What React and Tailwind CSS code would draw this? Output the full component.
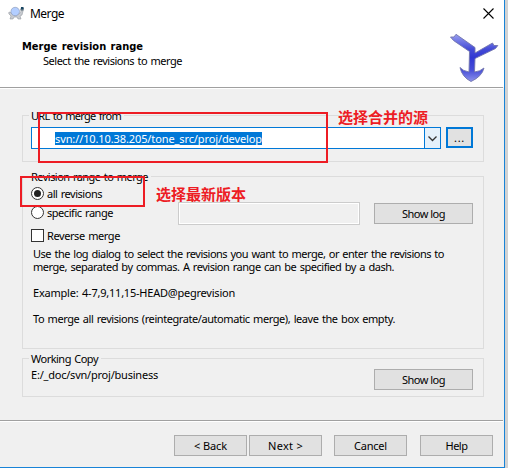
import { useLayoutEffect, useRef, useState } from "react";

// Text set to a fixed run length by adjusting its tracking.
function Label({ children, w, className = "" }) {
  const ref = useRef(null);
  const [spacing, setSpacing] = useState(0);
  useLayoutEffect(() => {
    const natural = ref.current.getBoundingClientRect().width;
    setSpacing((w - natural) / children.length);
  }, [children, w]);
  return (
    <span ref={ref} style={{ letterSpacing: `${spacing}px` }} className={`inline-block whitespace-pre ${className}`}>
      {children}
    </span>
  );
}

function Button({ children, w, className = "" }) {
  return (
    <button className={`flex h-[21px] shrink-0 items-center justify-center border border-[#adadad] bg-[#e1e1e1] ${className}`}>
      <Label w={w}>{children}</Label>
    </button>
  );
}

function Group({ title, w, className = "", children }) {
  return (
    <section className={`relative w-[462px] shrink-0 border border-[#dcdcdc] ${className}`}>
      <h2 className="absolute -top-[7px] left-[6px] h-[13px] bg-[#f0f0f0] pr-[3px] pl-[2px] leading-[13px]">
        <Label w={w}>{title}</Label>
      </h2>
      {children}
    </section>
  );
}

function Radio({ checked }) {
  return (
    <span className="flex size-[13px] shrink-0 items-center justify-center rounded-full border border-[#333] bg-white">
      {checked && <span className="size-[7px] rounded-full bg-[#222]" />}
    </span>
  );
}

function TurtleIcon() {
  return (
    <svg className="mt-[6px] h-[14px] w-[17px]" viewBox="0 0 17 14">
      <path d="M1 8 Q0 6 2 6 L4 8 L11 8 L14 4 L15 5 L14 9 L12 10 L13 13 L10 13 L9 11 L6 11 L5 13 L2 13 L3 10 Z" fill="#c8cbd0" stroke="#969ba2" strokeWidth=".6" />
      <ellipse cx="7.2" cy="5.5" rx="4.3" ry="4.2" fill="#b3ceff" stroke="#8794b2" strokeWidth=".6" />
      <path d="M12 4 L13 1.5 L16 2 L15.5 5 L13 5 Z" fill="#8a969e" />
      <rect x="13" y="1" width="2.5" height="2.5" fill="#174461" />
    </svg>
  );
}

function MergeArrow() {
  return (
    <svg className="absolute top-[33px] left-[449px] h-[50px] w-[50px]" viewBox="0 0 50 50">
      <defs>
        <linearGradient id="arrow" gradientUnits="userSpaceOnUse" x1="0" y1="0" x2="0" y2="49">
          <stop offset="0" stopColor="#a0a6f2" />
          <stop offset=".33" stopColor="#444bd6" />
          <stop offset=".5" stopColor="#3037d2" />
          <stop offset=".75" stopColor="#464dd8" />
          <stop offset="1" stopColor="#8f95ec" />
        </linearGradient>
      </defs>
      <path d="M1.500 4 L5 4 L7 1.300 L26 14.500 V20 L43.500 10 L45 12.500 L48.800 12.500 L46.500 15.500 L26 25.500 L25.500 39 Q31 38.500 35 35 Q33 43.500 22 48.500 Q13 44 11 34.500 Q14 38 20 39 L20.500 18.500 L4.500 7.500 Z" fill="url(#arrow)" stroke="#7275ad" strokeWidth=".9" strokeLinejoin="round" />
    </svg>
  );
}

export default function App() {
  return (
    <div className="relative flex h-[468px] w-[508px] overflow-hidden bg-[#d2d2d2] font-['Noto_Sans',sans-serif] text-[11px] leading-[13px] [word-spacing:1px] text-black">
      <div className="flex h-[468px] w-[505px] flex-col border-r border-b border-[#1883d7] bg-[#f0f0f0]">
        <header className="h-[87px] shrink-0 bg-white">
          <div className="flex h-[27px] pl-2">
            <TurtleIcon />
            <Label w={34} className="mt-[6px] ml-[5px] text-[12px] leading-4">Merge</Label>
            <svg className="mt-2 mr-[10px] ml-auto size-[11px]" viewBox="0 0 11 11">
              <path d="M.5 .5 L10.500 10.500 M10.500 .5 L.5 10.500" stroke="#000" strokeWidth="1.1" />
            </svg>
          </div>
          <h1 className="mt-[13px] ml-[22px] h-[14px] font-['DejaVu_Sans_Condensed','DejaVu_Sans',sans-serif] font-bold font-stretch-condensed"><Label w={121}>Merge revision range</Label></h1>
          <p className="ml-[43px]"><Label w={139}>Select the revisions to merge</Label></p>
        </header>
        <div className="h-[2px] w-[503px] shrink-0 border-t border-b border-t-[#a0a0a0] border-b-white" />

        <main className="flex h-[331px] shrink-0 flex-col pt-[26px] pl-[22px]">
          <Group title="URL to merge from" w={90} className="h-[47px]">
            <div className="flex pt-[11px] pl-2">
              <div className="flex h-[22px] w-[410px] border border-[#0078d7] bg-white">
                <div className="flex-1 pt-1 pl-[23px]">
                  <span className="inline-block h-[13px] w-[207px] bg-[#0078d7] align-top text-white"><Label w={207}>svn://10.10.38.205/tone_src/proj/develop</Label></span>
                </div>
                <div className="flex w-4 items-center justify-center border-l border-[#0078d7] bg-[#e5f1fb]">
                  <svg className="mt-px size-[9px]" viewBox="0 0 9 9"><path d="M.5 2.500 L4.500 6.500 L8.500 2.500" fill="none" stroke="#333" strokeWidth="1.300" /></svg>
                </div>
              </div>
              <button className="ml-[5px] flex h-[21px] w-[27px] items-center justify-center border-2 border-[#0078d7] bg-[#e1e1e1]"><Label w={11}>...</Label></button>
            </div>
          </Group>

          <Group title="Revision range to merge" w={117} className="mt-[14px] h-[173px]">
            <div className="flex h-[48px] pl-2">
              <div className="flex w-[147px] flex-col pt-[10px]">
                <label className="flex h-[19px] items-start gap-[3px]"><Radio checked /><Label w={55}>all revisions</Label></label>
                <label className="flex h-[19px] items-start gap-[3px]"><Radio /><Label w={66}>specific range</Label></label>
              </div>
              <div className="mt-[25px] h-[23px] w-[182px] border border-[#ccc] p-px"><div className="size-full bg-[#f0f0f0] ring-1 ring-white" /></div>
              <Button w={43} className="mt-[26px] ml-[14px] w-[99px]">Show log</Button>
            </div>
            <label className="mt-1 flex h-[18px] gap-[3px] pl-2"><span className="size-[13px] border border-[#333] bg-white" /><Label w={73}>Reverse merge</Label></label>
            <div className="ml-[10px] flex flex-col items-start">
              <Label w={411}>Use the log dialog to select the revisions you want to merge, or enter the revisions to</Label>
              <Label w={361}>merge, separated by commas. A revision range can be specified by a dash.</Label>
              <Label w={202} className="mt-[13px]">Example: 4-7,9,11,15-HEAD@pegrevision</Label>
              <Label w={362} className="mt-[13px]">To merge all revisions (reintegrate/automatic merge), leave the box empty.</Label>
            </div>
          </Group>

          <Group title="Working Copy" w={67} className="mt-[9px] h-[39px]">
            <div className="flex items-start justify-between pt-[10px] pr-[10px] pl-2">
              <Label w={127} className="-mt-px">E:/_doc/svn/proj/business</Label>
              <Button w={43} className="w-[99px]">Show log</Button>
            </div>
          </Group>
        </main>

        <div className="h-[2px] w-[503px] shrink-0 border-t border-b border-t-[#a0a0a0] border-b-white" />
        <footer className="flex pt-[13px] pl-[174px]">
          <Button w={33} className="w-[73px]">{"< Back"}</Button>
          <Button w={35} className="ml-[2px] w-[73px]">{"Next >"}</Button>
          <Button w={33} className="ml-3 w-[73px]">Cancel</Button>
          <Button w={22} className="ml-[13px] w-[73px]">Help</Button>
        </footer>
      </div>

      <MergeArrow />
      <div className="absolute top-[112px] left-[38px] h-[51px] w-[290px] border-2 border-[#ed1c24]" />
      <div className="absolute top-[176px] left-[20px] h-[31px] w-[125px] border-2 border-[#ed1c24]" />
      <p className="absolute top-[109px] left-[338px] font-['Noto_Sans_CJK_SC',sans-serif] text-[15px] leading-4 font-bold whitespace-nowrap text-[#ed1c24]">选择合并的源</p>
      <p className="absolute top-[186px] left-[156px] font-['Noto_Sans_CJK_SC',sans-serif] text-[15px] leading-4 font-bold whitespace-nowrap text-[#ed1c24]">选择最新版本</p>
    </div>
  );
}
